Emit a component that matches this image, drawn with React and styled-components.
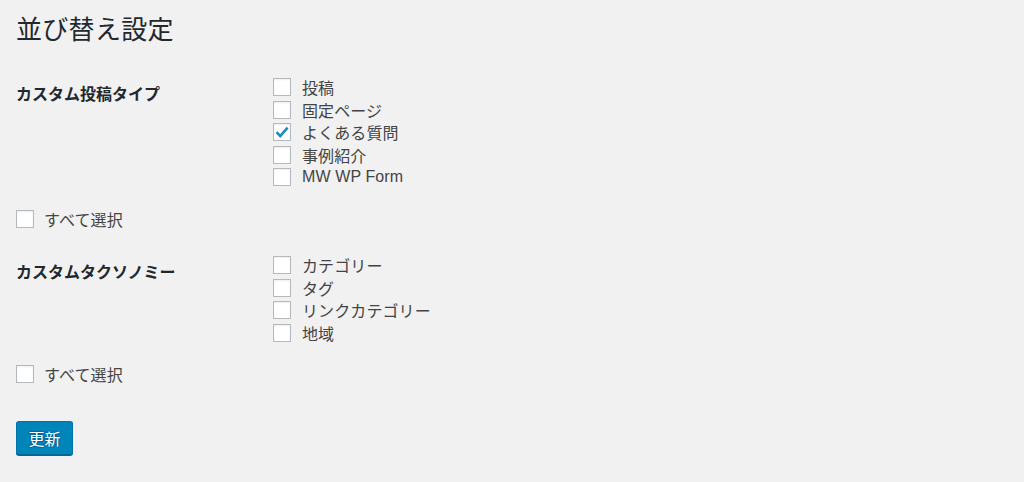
import React from "react";
import styled, { createGlobalStyle } from "styled-components";

const GlobalStyle = createGlobalStyle`
	html, body {
		margin: 0;
		padding: 0;
		background: #f1f1f1;
	}

	body {
		font-family: "Liberation Sans", "Noto Sans CJK JP", sans-serif;
		color: #444;
	}
`;

const sections = [
	{
		label: "カスタム投稿タイプ",
		options: [
			{ name: "投稿", checked: false },
			{ name: "固定ページ", checked: false },
			{ name: "よくある質問", checked: true },
			{ name: "事例紹介", checked: false },
			{ name: "MW WP Form", checked: false },
		],
	},
	{
		label: "カスタムタクソノミー",
		options: [
			{ name: "カテゴリー", checked: false },
			{ name: "タグ", checked: false },
			{ name: "リンクカテゴリー", checked: false },
			{ name: "地域", checked: false },
		],
	},
];

const Wrap = styled.div`
	padding: 13px 16px 0 16px;
	width: 1024px;
	height: 482px;
	box-sizing: border-box;
`;

const Title = styled.h1`
	margin: 0;
	font-size: 26px;
	line-height: 34px;
	font-weight: 400;
	color: #23282d;
	letter-spacing: 0.3px;
`;

const Section = styled.div`
	display: grid;
	grid-template-columns: 257px 1fr;
	margin-top: ${ ( props ) => props.$top }px;
`;

const SectionLabel = styled.div`
	font-size: 16px;
	line-height: 22.5px;
	font-weight: 700;
	color: #23282d;
	padding-top: 7.5px;
`;

const OptionList = styled.div`
	display: flex;
	flex-direction: column;
`;

const Row = styled.label`
	display: flex;
	align-items: center;
	height: 22.5px;
	font-size: 16px;
	color: #444;
	letter-spacing: 0.1px;
`;

const SelectAllRow = styled( Row )`
	margin-top: ${ ( props ) => props.$top }px;
`;

const Box = styled.span`
	flex: none;
	display: flex;
	align-items: center;
	justify-content: center;
	width: 18px;
	height: 18px;
	box-sizing: border-box;
	margin-right: ${ ( props ) => props.$gap }px;
	background: #fff;
	border: 1px solid #b4b9be;
	box-shadow: inset 0 1px 2px rgba(0, 0, 0, 0.07);
`;

const Button = styled.button`
	margin-top: 35.5px;
	width: 57px;
	height: 34px;
	padding: 0;
	font-family: "Liberation Sans", "Noto Sans CJK JP", sans-serif;
	font-size: 16px;
	color: #fff;
	background: #0085ba;
	border: 1px solid #0073aa;
	border-bottom-color: #006799;
	border-radius: 3px;
	box-shadow: 0 1px 0 #006799;
	text-shadow: 0 -1px 1px #006799, 1px 0 1px #006799, 0 1px 1px #006799, -1px 0 1px #006799;
	cursor: pointer;
`;

function Checkbox( { checked, gap } ) {
	return (
		<Box $gap={ gap }>
			{ checked && (
				<svg width="16" height="16" viewBox="0 0 16 16">
					<path d="M2.5 8.2 L6.2 12 L13.6 3.6" fill="none" stroke="#1e8cbe" strokeWidth="2.6" strokeLinejoin="miter" />
				</svg>
			) }
		</Box>
	);
}

export default function App() {
	return (
		<Wrap>
			<GlobalStyle />
			<Title>並び替え設定</Title>
			{ sections.map( ( section, i ) => (
				<React.Fragment key={ section.label }>
					<Section $top={ i === 0 ? 29 : 23.5 }>
						<SectionLabel>{ section.label }</SectionLabel>
						<OptionList>
							{ section.options.map( ( option ) => (
								<Row key={ option.name }>
									<Checkbox checked={ option.checked } gap={ 11 } />
									{ option.name }
								</Row>
							) ) }
						</OptionList>
					</Section>
					<SelectAllRow $top={ i === 0 ? 19.5 : 18.5 }>
						<Checkbox checked={ false } gap={ 10 } />
						すべて選択
					</SelectAllRow>
				</React.Fragment>
			) ) }
			<Button type="submit">更新</Button>
		</Wrap>
	);
}
